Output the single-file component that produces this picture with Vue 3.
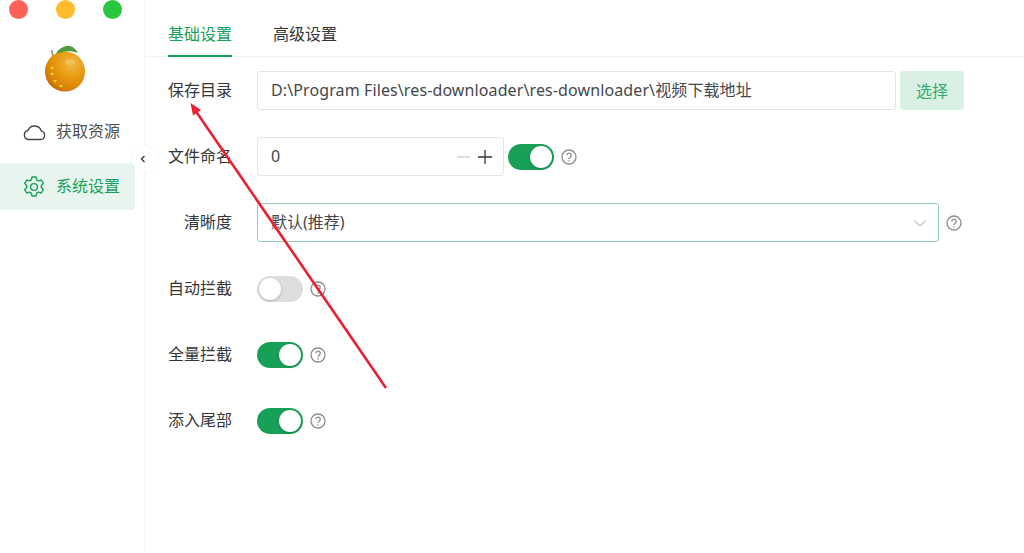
<template>
  <div class="app">
    <aside class="sidebar">
      <div class="traffic">
        <span class="dot red"></span>
        <span class="dot yellow"></span>
        <span class="dot green"></span>
      </div>
      <div class="logo">
        <svg width="44" height="48" viewBox="0 0 44 48">
          <defs>
            <radialGradient id="orange" cx="0.66" cy="0.3" r="0.8">
              <stop offset="0" stop-color="#f2b84e" />
              <stop offset="0.4" stop-color="#e99e12" />
              <stop offset="0.8" stop-color="#d98106" />
              <stop offset="1" stop-color="#b55c08" />
            </radialGradient>
          </defs>
          <circle cx="22" cy="26.500" r="20" fill="url(#orange)" />
          <ellipse cx="27" cy="17" rx="5" ry="3" fill="#f3c468" opacity="0.75" />
          <path d="M13 9 C 15 4, 22 0, 27 1 C 31 2, 33 5, 35 8 C 30 6, 24 6, 20 7 C 18 7.500, 15 8, 13 9 Z" fill="#4f9a3a" />
          <path d="M10 11 L 8.500 5" stroke="#b08a4a" stroke-width="1.5" />
          <path d="M7 22 l4 0 l-2 3z M7 28 l4 0 l-2 3z M10 35 l4 0 l-2 3z M16 40 l4 0 l-2 3z" fill="#e8d428" />
        </svg>
      </div>
      <nav class="menu">
        <div class="menu-item">
          <svg class="menu-icon" width="24" height="24" viewBox="0 0 24 24" fill="none" stroke="#444" stroke-width="1.3">
            <path d="M6 19.500 H18.500 a4.200 4.200 0 0 0 .8-8.300 A7 7 0 0 0 6 10.500 A4.600 4.600 0 0 0 6 19.500 Z" />
          </svg>
          <span>获取资源</span>
        </div>
        <div class="menu-item active">
          <svg class="menu-icon" width="24" height="24" viewBox="0 0 24 24" fill="none" stroke="#18a058" stroke-width="1.4" stroke-linejoin="round">
            <path d="M10 2 h4 l.6 2.800 2 1.100 2.700-.9 2 3.400-2.100 2.400 v1.400 l2.100 2.400-2 3.400-2.700-.9-2 1.100-.6 2.800 h-4 l-.6-2.800-2-1.100-2.700.9-2-3.400 2.100-2.400 v-1.400 l-2.100-2.400 2-3.400 2.700.9 2-1.100 Z" />
            <circle cx="12" cy="12" r="3.400" />
          </svg>
          <span>系统设置</span>
        </div>
      </nav>
      <div class="collapse">
        <svg width="8" height="10" viewBox="0 0 8 10" fill="none" stroke="#333" stroke-width="1.3"><path d="M5.500 2 L2.500 5 L5.500 8" /></svg>
      </div>
    </aside>

    <main class="content">
      <div class="tabs">
        <div v-for="(t, i) in tabs" :key="t" class="tab" :class="{ on: i === 0 }">{{ t }}</div>
      </div>

      <div class="form">
        <div class="row">
          <label class="label">保存目录</label>
          <div class="box path"><span>D:\Program Files\res-downloader\res-downloader\视频下载地址</span></div>
          <button class="pick">选择</button>
        </div>

        <div class="row">
          <label class="label">文件命名</label>
          <div class="box number">
            <span class="grow">0</span>
            <svg width="14" height="14" viewBox="0 0 14 14" stroke="#c9cacc" stroke-width="1.3"><path d="M0 7 H13" /></svg>
            <svg class="plus" width="14" height="14" viewBox="0 0 14 14" stroke="#333" stroke-width="1.3"><path d="M0 7 H14 M7 0 V14" /></svg>
          </div>
          <div class="switch on small-gap"><i></i></div>
          <svg class="help" width="16" height="16" viewBox="0 0 16 16"><use href="#q" /></svg>
        </div>

        <div class="row">
          <label class="label">清晰度</label>
          <div class="box select">
            <span class="grow">默认(推荐)</span>
            <svg class="chevron" width="14" height="14" viewBox="0 0 14 14" fill="none" stroke="#c2c4c6" stroke-width="1.1"><path d="M1 4.500 L7 10 L13 4.500" /></svg>
          </div>
          <svg class="help" width="16" height="16" viewBox="0 0 16 16"><use href="#q" /></svg>
        </div>

        <div v-for="s in switches" :key="s.label" class="row">
          <label class="label">{{ s.label }}</label>
          <div class="switch" :class="{ on: s.on }"><i></i></div>
          <svg class="help" width="16" height="16" viewBox="0 0 16 16"><use href="#q" /></svg>
        </div>
      </div>
    </main>

    <svg class="defs" width="0" height="0">
      <symbol id="q" viewBox="0 0 16 16">
        <circle cx="8" cy="8" r="7" fill="none" stroke="#8a8d91" stroke-width="1.3" />
        <path d="M5.800 6.300 a2.200 2.200 0 1 1 3.400 1.900 c-.8.500-1.200.9-1.200 1.800" fill="none" stroke="#8a8d91" stroke-width="1.3" />
        <circle cx="8" cy="12" r=".8" fill="#8a8d91" />
      </symbol>
    </svg>

    <!-- red annotation arrow drawn over the screenshot -->
    <svg class="arrow" width="1024" height="553" viewBox="0 0 1024 553">
      <path d="M386 388 L195 110" stroke="#ea1f30" stroke-width="2.600" fill="none" />
      <path d="M190.500 103 L201 110 L193 115.500 Z" fill="#ea1f30" />
    </svg>
  </div>
</template>

<script setup>
const tabs = ['基础设置', '高级设置']

const switches = [
  { label: '自动拦截', on: false },
  { label: '全量拦截', on: true },
  { label: '添入尾部', on: true },
]
</script>

<style>
html,
body {
  margin: 0;
  background: #fff;
  overflow: hidden;
}
</style>

<style scoped>
.app {
  position: relative;
  display: flex;
  width: 1024px;
  height: 553px;
  font-family: "Noto Sans", "Noto Sans CJK SC", sans-serif;
  font-size: 16px;
  line-height: 22px;
  color: #333639;
  overflow: hidden;
}

.sidebar {
  position: relative;
  flex: none;
  width: 145px;
  box-sizing: border-box;
  border-right: 1px solid #f4f5f6;
}

.traffic {
  display: flex;
  gap: 28px;
  padding: 0 0 0 9px;
  margin-bottom: 26px;
}

.dot {
  width: 19px;
  height: 19px;
  border-radius: 50%;
}
.red { background: #fe5f57; }
.yellow { background: #febb2e; }
.green { background: #28c73f; }

.logo {
  height: 48px;
  padding-left: 43px;
  line-height: 0;
}

.menu {
  margin-top: 15px;
  padding-right: 9px;
}

.menu-item {
  display: flex;
  align-items: center;
  gap: 10px;
  height: 47px;
  padding-left: 22px;
  color: #4c4f52;
}

.menu-item span {
  margin-bottom: 2px;
}

.menu-item.active {
  margin-top: 8px;
  background: #e7f5ee;
  border-radius: 0 3px 3px 0;
  color: #18a058;
}

.collapse {
  position: absolute;
  top: 146px;
  left: 132px;
  width: 26px;
  height: 26px;
  box-sizing: border-box;
  padding-right: 4px;
  display: flex;
  align-items: center;
  justify-content: center;
  background: #fff;
  border-radius: 50%;
  box-shadow: 0 0 3px rgba(0, 0, 0, 0.06);
}

.content {
  flex: 1;
  min-width: 0;
}

.tabs {
  display: flex;
  gap: 41px;
  height: 57px;
  padding-left: 23px;
  border-bottom: 1px solid #f0f1f2;
  box-sizing: border-box;
}

.tab {
  height: 57px;
  box-sizing: border-box;
  padding-top: 23px;
}

.tab.on {
  color: #18a058;
  border-bottom: 2px solid #18a058;
}

.form {
  padding: 14px 0 0 23px;
}

.row {
  display: flex;
  align-items: center;
  height: 39px;
  margin-bottom: 27px;
}

.label {
  flex: none;
  width: 64px;
  margin-right: 25px;
  margin-bottom: 2px;
  text-align: right;
  white-space: nowrap;
}

.box {
  display: flex;
  align-items: center;
  box-sizing: border-box;
  height: 39px;
  padding: 0 14px 0 13px;
  border: 1px solid #e4e4e8;
  border-radius: 3px;
  color: #45484b;
}

.box span {
  margin-bottom: 2px;
}

.path {
  width: 639px;
  letter-spacing: 0.11px;
}

.pick {
  width: 64px;
  height: 39px;
  margin-left: 4px;
  border: 0;
  border-radius: 3px;
  background: #daf0e4;
  color: #2fab6b;
  font: inherit;
}

.number {
  width: 247px;
}

.plus {
  margin-left: 7px;
  margin-right: -3px;
}

.grow {
  flex: 1;
}

.select {
  width: 682px;
  border-color: #93cfae;
}

.chevron {
  margin-right: -3px;
}

.switch {
  position: relative;
  width: 46px;
  height: 26px;
  border-radius: 13px;
  background: #dedede;
}

.switch.small-gap {
  margin-left: 4px;
}

.switch.on {
  background: #18a058;
}

.switch i {
  position: absolute;
  top: 2px;
  left: 2px;
  width: 22px;
  height: 22px;
  border-radius: 50%;
  background: #fff;
  box-shadow: 0 1px 3px rgba(0, 0, 0, 0.2);
}

.switch.on i {
  left: 22px;
}

.help {
  margin-left: 7px;
}

.defs {
  position: absolute;
}

.arrow {
  position: absolute;
  top: 0;
  left: 0;
  pointer-events: none;
}
</style>
